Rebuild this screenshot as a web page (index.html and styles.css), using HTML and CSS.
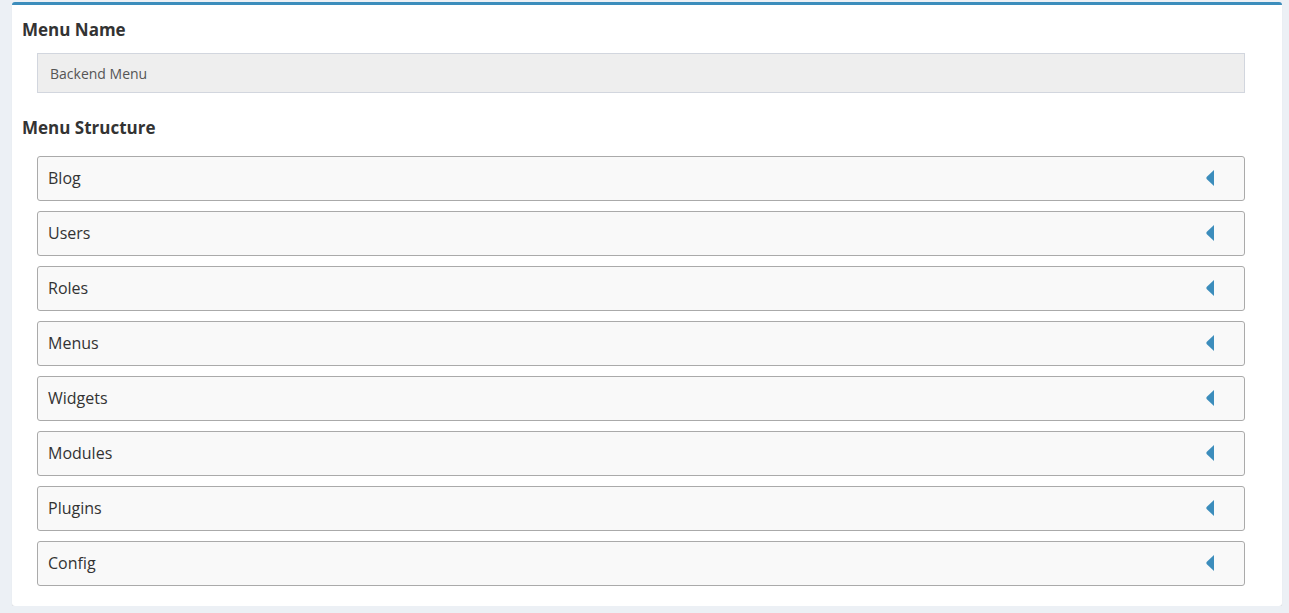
FILE: index.html
```html
<!DOCTYPE html>
<html>
<head>
<meta charset="utf-8">
<title>Menu</title>
<link rel="stylesheet" href="styles.css">
</head>
<body>
<div class="box">
  <div class="form-group">
    <label class="label">Menu Name</label>
    <div class="input">Backend Menu</div>
  </div>
  <div class="form-group">
    <label class="label label-structure">Menu Structure</label>
    <ul class="menu-list">
      <li class="menu-item"><span>Blog</span><svg class="caret" viewBox="0 0 8 16"><path d="M8 0 L8 16 L0.6 8.9 Q0 8 0.6 7.1 Z"/></svg></li>
      <li class="menu-item"><span>Users</span><svg class="caret" viewBox="0 0 8 16"><path d="M8 0 L8 16 L0.6 8.9 Q0 8 0.6 7.1 Z"/></svg></li>
      <li class="menu-item"><span>Roles</span><svg class="caret" viewBox="0 0 8 16"><path d="M8 0 L8 16 L0.6 8.9 Q0 8 0.6 7.1 Z"/></svg></li>
      <li class="menu-item"><span>Menus</span><svg class="caret" viewBox="0 0 8 16"><path d="M8 0 L8 16 L0.6 8.9 Q0 8 0.6 7.1 Z"/></svg></li>
      <li class="menu-item"><span>Widgets</span><svg class="caret" viewBox="0 0 8 16"><path d="M8 0 L8 16 L0.6 8.9 Q0 8 0.6 7.1 Z"/></svg></li>
      <li class="menu-item"><span>Modules</span><svg class="caret" viewBox="0 0 8 16"><path d="M8 0 L8 16 L0.6 8.9 Q0 8 0.6 7.1 Z"/></svg></li>
      <li class="menu-item"><span>Plugins</span><svg class="caret" viewBox="0 0 8 16"><path d="M8 0 L8 16 L0.6 8.9 Q0 8 0.6 7.1 Z"/></svg></li>
      <li class="menu-item"><span>Config</span><svg class="caret" viewBox="0 0 8 16"><path d="M8 0 L8 16 L0.6 8.9 Q0 8 0.6 7.1 Z"/></svg></li>
    </ul>
  </div>
</div>
</body>
</html>
```
FILE: styles.css
```css
html, body {
  margin: 0;
  padding: 0;
  background: #ecf0f5;
}
body {
  font-family: "Open Sans", "Noto Sans", sans-serif;
  color: #333;
  padding-top: 2px;
}
.box {
  margin: 0 7px 0 12px;
  background: #fff;
  border-top: 3px solid #3c8dbc;
  border-radius: 3px;
  box-shadow: 0 1px 1px rgba(0, 0, 0, 0.1);
  padding: 15px 10px 20px 10px;
}
.label {
  display: block;
  font-size: 17px;
  font-weight: 700;
  line-height: 20px;
  color: #333;
}
.input {
  margin: 13px 27px 0 15px;
  height: 38px;
  border: 1px solid #d2d6de;
  background: #eee;
  color: #555;
  font-size: 14px;
  padding: 0 12px;
  display: flex;
  align-items: center;
}
.label-structure {
  margin-top: 25px;
}
.menu-list {
  list-style: none;
  margin: 18px 27px 0 15px;
  padding: 0;
  display: flex;
  flex-direction: column;
  gap: 10px;
}
.menu-item {
  box-sizing: border-box;
  height: 45px;
  border: 1px solid #aaa;
  border-radius: 3px;
  background: #f9f9f9;
  display: flex;
  align-items: center;
  justify-content: space-between;
  padding: 0 30px 2px 10px;
  font-size: 16px;
  color: #333;
}
.caret {
  width: 8px;
  height: 16px;
  fill: #3c8dbc;
  margin-top: 1px;
}
```
